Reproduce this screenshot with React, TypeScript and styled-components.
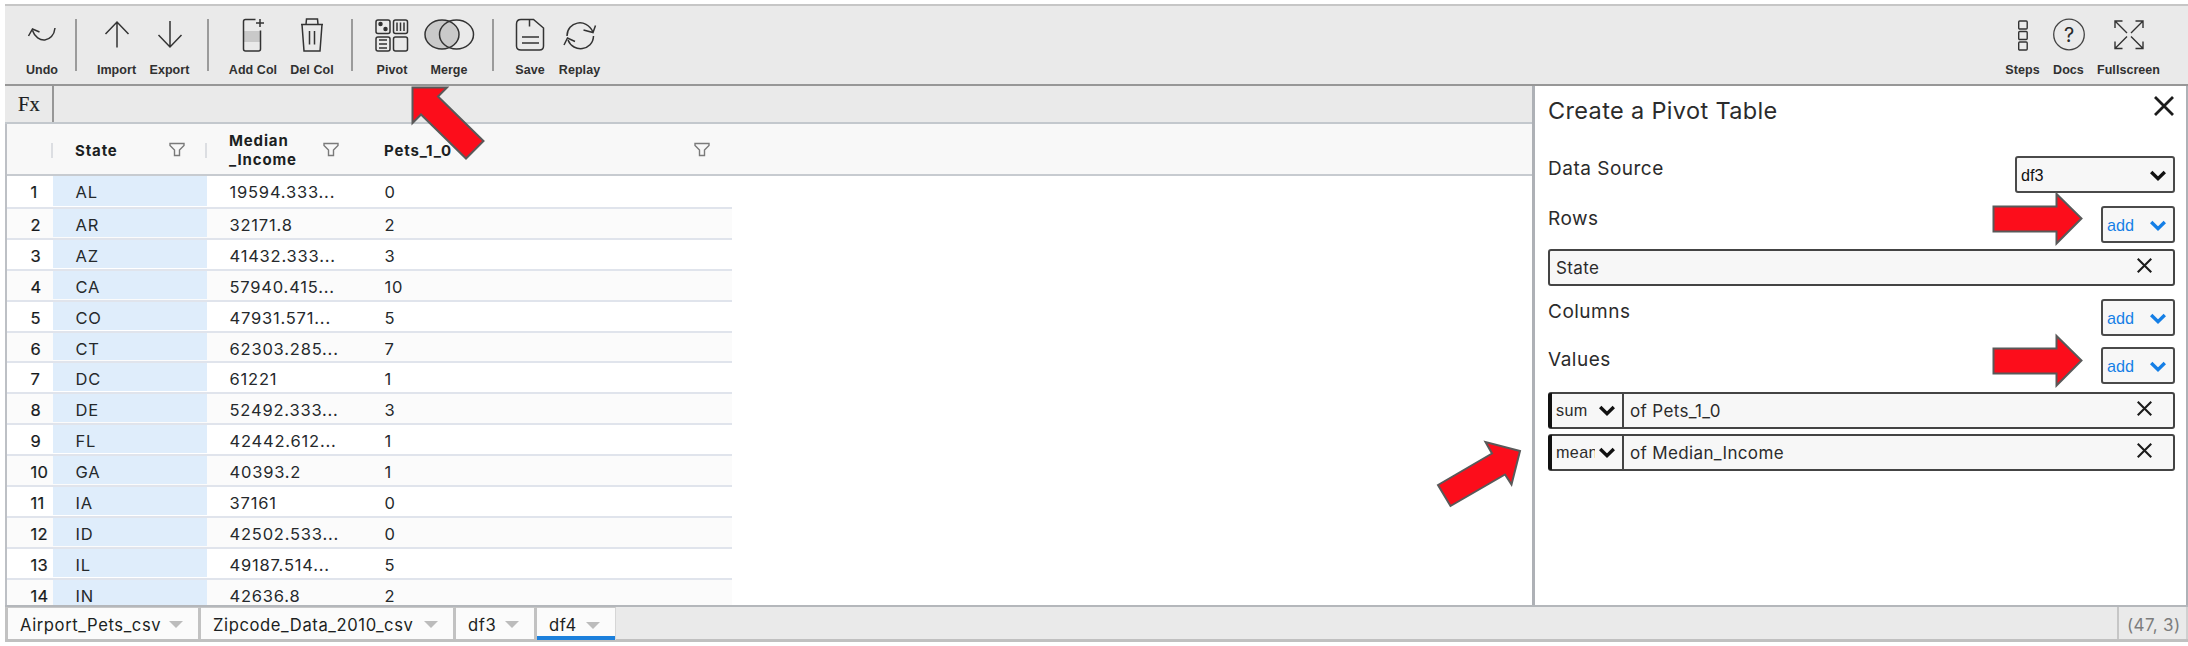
import React from "react";
import styled, { createGlobalStyle } from "styled-components";

const GlobalStyle = createGlobalStyle`
  * { box-sizing: border-box; }
  body { margin: 0; background: #fff; overflow: hidden; }
`;

const Page = styled.div`
  position: relative;
  width: 2188px;
  height: 646px;
  padding: 4px 0 4px 5px;
  font-family: Inter, "Liberation Sans", sans-serif;
  color: #1c1f22;
  background: #fff;
`;

const Shell = styled.div`
  display: flex;
  flex-direction: column;
  height: 638px;
  border-left: 2px solid #bdc0c5;
`;

const Toolbar = styled.header`
  display: flex;
  justify-content: space-between;
  height: 82px;
  flex: none;
  margin-left: -2px;
  padding: 0 23px 0 8px;
  background: #eaeaea;
  border-top: 2px solid #c6c6c6;
  border-bottom: 2px solid #979797;
`;

const Group = styled.div`
  display: flex;
`;

const Tool = styled.button<{ $w: number }>`
  display: flex;
  flex-direction: column;
  align-items: center;
  width: ${(p) => p.$w}px;
  padding: 8px 0 0;
  border: 0;
  background: none;
  color: #303030;
  svg { display: block; height: 42px; flex: none; overflow: visible; }
`;

const ToolLabel = styled.span`
  margin-top: 7px;
  font: bold 12.5px/14px "Liberation Sans", Arial, sans-serif;
  letter-spacing: 0.05px;
  white-space: nowrap;
`;

const Divider = styled.div<{ $l: number; $r: number }>`
  width: 2px;
  height: 52px;
  margin: 13px ${(p) => p.$r}px 0 ${(p) => p.$l}px;
  background: #9b9b9b;
`;

const Body = styled.div`
  display: flex;
  flex: 1;
  min-height: 0;
`;

const Sheet = styled.section`
  display: flex;
  flex-direction: column;
  flex: 1;
  min-width: 0;
`;

const FormulaBar = styled.div`
  display: flex;
  height: 38px;
  flex: none;
  margin-left: -2px;
  background: #eaeaea;
  border-bottom: 2px solid #c3c8cd;
`;

const FxLabel = styled.div`
  width: 49px;
  padding: 7px 0 0 13px;
  border-right: 2px solid #979797;
  font: 20.5px/23px "Liberation Serif", serif;
  letter-spacing: 0.1px;
  -webkit-text-stroke: 0.2px;
`;

const HeaderRow = styled.div`
  display: flex;
  align-items: center;
  height: 52px;
  flex: none;
  background: #f8f8f8;
  border-bottom: 2px solid #c7cbd0;
  font-size: 15px;
  font-weight: 700;
  line-height: 19px;
  letter-spacing: 0.85px;
`;

const HeaderCell = styled.div<{ $w: number; $pr: number; $bar?: boolean }>`
  position: relative;
  display: flex;
  align-items: center;
  justify-content: space-between;
  width: ${(p) => p.$w}px;
  padding: 2px ${(p) => p.$pr}px 0 22px;
  white-space: pre-line;
  svg { margin-top: -2px; }
  &::before {
    content: "";
    position: absolute;
    left: -2px;
    width: 2px;
    height: 15px;
    background: ${(p) => (p.$bar ? "#dcdee2" : "transparent")};
  }
`;

const Rows = styled.div`
  flex: 1;
  overflow: hidden;
`;

const Row = styled.div<{ $h: number; $odd: boolean }>`
  display: flex;
  width: 725px;
  height: ${(p) => p.$h}px;
  background: ${(p) => (p.$odd ? "#fbfbfb" : "#fff")};
  border-bottom: 2px solid #e0e4ec;
  font-size: 16.5px;
  line-height: 32px;
`;

const Cell = styled.div<{ $w: number; $selected?: boolean; $index?: boolean }>`
  width: ${(p) => p.$w}px;
  height: calc(100% - 1px);
  padding-left: ${(p) => (p.$index ? 23.5 : 22.5)}px;
  background: ${(p) => (p.$selected ? "#dfedfb" : "transparent")};
  color: ${(p) => (p.$index ? "#16191c" : "#25292c")};
  -webkit-text-stroke: ${(p) => (p.$index ? "0.2px" : "0")};
  letter-spacing: ${(p) => (p.$index ? "0.2px" : "0.8px")};
`;

const Panel = styled.aside`
  display: flex;
  flex-direction: column;
  width: 656px;
  padding: 0 11px 0 13px;
  border-left: 3px solid #aeb1b6;
  border-right: 2px solid #aeb1b6;
  background: #fff;
  color: #2b2b2b;
`;

const TitleRow = styled.div`
  display: flex;
  justify-content: space-between;
  height: 70px;
  padding: 10px 1px 0 0;
`;

const Title = styled.h2`
  margin: -1px 0 0;
  font-size: 23.5px;
  line-height: 31px;
  font-weight: 400;
  letter-spacing: 0.35px;
`;

const CloseMark = styled.svg<{ $s: number }>`
  width: ${(p) => p.$s}px;
  height: ${(p) => p.$s}px;
  fill: none;
  stroke: #1c1c1c;
  stroke-width: 2.8;
  overflow: visible;
`;

const Field = styled.div<{ $h: number }>`
  display: flex;
  justify-content: space-between;
  height: ${(p) => p.$h}px;
  font-size: 19px;
  line-height: 25px;
  letter-spacing: 0.5px;
`;

const Select = styled.button<{ $w: number; $accent?: boolean }>`
  display: flex;
  align-items: center;
  justify-content: space-between;
  width: ${(p) => p.$w}px;
  height: 37px;
  padding: 1px 7px 0 4px;
  border: 2px solid #4a4a4a;
  border-radius: 3px;
  background: #f7f7f7;
  color: ${(p) => (p.$accent ? "#157fe6" : "#111")};
  font: 16.2px "Liberation Sans", Arial, sans-serif;
`;

const Chip = styled.div<{ $gap: number }>`
  display: flex;
  align-items: center;
  height: 37px;
  flex: none;
  margin-bottom: ${(p) => p.$gap}px;
  padding-right: 21px;
  border: 2px solid #444;
  border-radius: 3px;
  background: #f7f7f7;
  font-size: 17px;
  letter-spacing: 0.35px;
  > svg { margin-bottom: 4px; }
`;

const ChipText = styled.span`
  flex: 1;
  padding-left: 6px;
`;

const Aggregate = styled.div`
  display: flex;
  align-items: center;
  justify-content: space-between;
  width: 76px;
  height: 35px;
  margin: -1px 0 -1px -2px;
  padding: 0 7px 0 4px;
  border-left: 4px solid #111;
  border-right: 2px solid #444;
  border-radius: 3px 0 0 3px;
  font: 16.2px "Liberation Sans", Arial, sans-serif;
`;

const AggregateName = styled.span`
  width: 39px;
  overflow: hidden;
  white-space: nowrap;
`;

const Footer = styled.footer`
  display: flex;
  height: 37px;
  flex: none;
  margin-left: -2px;
  background: #eaeaea;
  border-top: 2px solid #b4b7bb;
  border-bottom: 3px solid #c0c0c0;
`;

const Tab = styled.div<{ $w: number; $active?: boolean }>`
  display: flex;
  align-items: center;
  justify-content: space-between;
  width: ${(p) => p.$w}px;
  height: ${(p) => (p.$active ? 33 : 32)}px;
  padding: 2px 15px 0 12px;
  background: #fbfbfb;
  border-right: ${(p) => (p.$active ? "1px solid #d6d6d6" : "3px solid #c2c2c2")};
  border-top: 1px solid #c8c8c8;
  box-shadow: ${(p) => (p.$active ? "inset 0 -4px #1c80dc" : "none")};
  font-size: 16.6px;
  letter-spacing: 0.6px;
  white-space: nowrap;
  &:first-child { width: ${(p) => p.$w + 3}px; border-left: 3px solid #c2c2c2; }
`;

const Caret = styled.i`
  border: 7px solid transparent;
  border-top-color: #bcbcbc;
  border-bottom: 0;
`;

const Shape = styled.div`
  width: 71px;
  margin-left: auto;
  padding: 6px 0 0 8px;
  border-left: 2px solid #c6c6c6;
  border-right: 2px solid #d0d0d0;
  color: #7d7d7d;
  font-size: 17px;
  line-height: 24px;
  letter-spacing: 0.35px;
  white-space: nowrap;
`;

const Annotations = styled.svg`
  position: absolute;
  left: 0;
  top: 0;
  fill: #fc0d1b;
  stroke: #595959;
  stroke-width: 2;
`;

const line = { fill: "none", stroke: "#333", strokeWidth: 1.5 };

const icons: Record<string, React.ReactNode> = {
  Undo: (
    <svg width="28" height="42" {...line}>
      <path d="M27 14C25.500 29 9 30 4.500 16.500M0.500 22l4-7 7 3" />
    </svg>
  ),
  Import: (
    <svg width="24" height="42" {...line}><path d="M12 33.500V8M0.500 20L12 8l11.500 12" /></svg>
  ),
  Export: (
    <svg width="24" height="42" {...line}><path d="M12 7v26M0.500 21L12 33l11.500-12" /></svg>
  ),
  "Add Col": (
    <svg width="22" height="42" {...line}>
      <rect x="2" y="17" width="17" height="11" fill="#c9c9c9" stroke="none" />
      <path d="M13.500 5.500H3.500q-2 0-2 2v27.500q0 2 2 2h13q2 0 2-2V16.500M18 5v8M14 9h8" />
    </svg>
  ),
  "Del Col": (
    <svg width="22" height="42" {...line}>
      <path d="M0 10.500h22M5 10.500l0.500-5.500h11l0.500 5.500M1 10.500L3 37h16l2-26.500M8.500 17v13.500M13.500 17v13.500" />
    </svg>
  ),
  Pivot: (
    <svg width="34" height="42" {...line}>
      <rect x="1" y="6" width="14" height="13.500" rx="2" />
      <rect x="18.500" y="6" width="14" height="13.500" rx="2" />
      <rect x="1" y="23" width="14" height="14" rx="2" />
      <rect x="18.500" y="23" width="14" height="14" rx="2" />
      <circle cx="5.500" cy="10" r="1.500" fill="#2a2a2a" />
      <circle cx="10.500" cy="15" r="1.500" fill="#2a2a2a" />
      <path d="M22 8.500v8.500M25.500 8.500v8.500M29 8.500v8.500M4 26h8M4 30h8M4 34h8" />
    </svg>
  ),
  Merge: (
    <svg width="50" height="42" {...line}>
      <ellipse cx="18" cy="20.500" rx="17" ry="14.500" fill="#c9c9c9" />
      <ellipse cx="32.500" cy="20.500" rx="17" ry="14.500" />
    </svg>
  ),
  Save: (
    <svg width="30" height="42" {...line}>
      <path d="M6 5.500h12.500l10 8.500v18q0 4-4 4H6q-4.500 0-4.500-4V10q0-4.500 4.500-4.500zM14.500 5.500v7M7 23h17M7 29h17" />
    </svg>
  ),
  Replay: (
    <svg width="34" height="42" {...line}>
      <path d="M4 22C4 8 23 3 30 18M20.500 16l9.500 2.500 2.500-7M30.500 22C30 37 10 39 5 26M1 31l3.500-7 7.500 3.500" />
    </svg>
  ),
  Steps: (
    <svg width="10" height="42" {...line} strokeWidth={1.4}>
      <rect x="0.700" y="7" width="8.500" height="8" rx="1" />
      <rect x="0.700" y="17.500" width="8.500" height="8" rx="1" />
      <rect x="0.700" y="28" width="8.500" height="8" rx="1" />
    </svg>
  ),
  Docs: (
    <svg width="32" height="42">
      <circle cx="16" cy="20.500" r="15.300" fill="none" stroke="#444" strokeWidth="1.300" />
      <text x="16" y="27.500" textAnchor="middle" fontFamily="Inter, sans-serif" fontSize="20" fill="#2a2a2a">?</text>
    </svg>
  ),
  Fullscreen: (
    <svg width="30" height="42" {...line} strokeWidth={1.4}>
      <path d="M13 19L1 7M1 14V7h7.500M17 19L29 7M21.500 7H29v7M13 22.500L1 34.500M1 27.500v7h7.500M17 22.500l12 12M29 27.500v7h-7.500" />
    </svg>
  ),
};

const ToolButton = ({ name, w }: { name: string; w: number }) => (
  <Tool $w={w}>
    {icons[name]}
    <ToolLabel>{name}</ToolLabel>
  </Tool>
);

const Funnel = () => (
  <svg width="16" height="15" viewBox="0 0 16 15" fill="none" stroke="#7a7a7a" strokeWidth="1.4">
    <path d="M1 1.500h14v2L10.500 8v5.500h-5V8L1 3.500z" />
  </svg>
);

const Chevron = ({ color = "#111" }: { color?: string }) => (
  <svg width="16" height="11" viewBox="0 0 16 11" fill="none" stroke={color} strokeWidth="3.400">
    <path d="M1.200 2L8 8.600 14.800 2" />
  </svg>
);

const Close = ({ size }: { size: number }) => (
  <CloseMark $s={size} viewBox="0 0 20 20"><path d="M1 1l18 18M19 1L1 19" /></CloseMark>
);

const AddSelect = () => (
  <Select $w={74} $accent>
    add
    <Chevron color="#157fe6" />
  </Select>
);

const data = [
  ["AL", "19594.333...", "0"],
  ["AR", "32171.8", "2"],
  ["AZ", "41432.333...", "3"],
  ["CA", "57940.415...", "10"],
  ["CO", "47931.571...", "5"],
  ["CT", "62303.285...", "7"],
  ["DC", "61221", "1"],
  ["DE", "52492.333...", "3"],
  ["FL", "42442.612...", "1"],
  ["GA", "40393.2", "1"],
  ["IA", "37161", "0"],
  ["ID", "42502.533...", "0"],
  ["IL", "49187.514...", "5"],
  ["IN", "42636.8", "2"],
];

const values = [
  { fn: "sum", of: "Pets_1_0", gap: 5 },
  { fn: "mean", of: "Median_Income", gap: 0 },
];

export default function App() {
  return (
    <Page>
      <GlobalStyle />
      <Shell>
        <Toolbar>
          <Group>
            <ToolButton name="Undo" w={58} />
            <Divider $l={4} $r={13} />
            <ToolButton name="Import" w={53} />
            <ToolButton name="Export" w={53} />
            <Divider $l={11} $r={14} />
            <ToolButton name="Add Col" w={60} />
            <ToolButton name="Del Col" w={58} />
            <Divider $l={10} $r={14} />
            <ToolButton name="Pivot" w={50} />
            <ToolButton name="Merge" w={64} />
            <Divider $l={11} $r={11} />
            <ToolButton name="Save" w={50} />
            <ToolButton name="Replay" w={49} />
          </Group>
          <Group>
            <ToolButton name="Steps" w={45} />
            <ToolButton name="Docs" w={47} />
            <ToolButton name="Fullscreen" w={73} />
          </Group>
        </Toolbar>
        <Body>
          <Sheet>
            <FormulaBar><FxLabel>Fx</FxLabel></FormulaBar>
            <HeaderRow>
              <HeaderCell $w={46} $pr={0} />
              <HeaderCell $w={154} $pr={22} $bar>State<Funnel /></HeaderCell>
              <HeaderCell $w={155} $pr={23} $bar>{"Median\n_Income"}<Funnel /></HeaderCell>
              <HeaderCell $w={371} $pr={23}>Pets_1_0<Funnel /></HeaderCell>
            </HeaderRow>
            <Rows>
              {data.map(([state, income, pets], i) => (
                <Row key={state} $h={i === 0 ? 33 : 30.9} $odd={i % 2 === 1}>
                  <Cell $w={46} $index>{i + 1}</Cell>
                  <Cell $w={154} $selected>{state}</Cell>
                  <Cell $w={155}>{income}</Cell>
                  <Cell $w={370}>{pets}</Cell>
                </Row>
              ))}
            </Rows>
          </Sheet>
          <Panel>
            <TitleRow>
              <Title>Create a Pivot Table</Title>
              <Close size={20} />
            </TitleRow>
            <Field $h={50}>Data Source<Select $w={160}>df3<Chevron /></Select></Field>
            <Field $h={43}>Rows<AddSelect /></Field>
            <Chip $gap={13}><ChipText>State</ChipText><Close size={15} /></Chip>
            <Field $h={48}>Columns<AddSelect /></Field>
            <Field $h={45}>Values<AddSelect /></Field>
            {values.map((v) => (
              <Chip key={v.of} $gap={v.gap}>
                <Aggregate><AggregateName>{v.fn}</AggregateName><Chevron /></Aggregate>
                <ChipText>of {v.of}</ChipText>
                <Close size={15} />
              </Chip>
            ))}
          </Panel>
        </Body>
        <Footer>
          <Tab $w={193}>Airport_Pets_csv<Caret /></Tab>
          <Tab $w={255}>Zipcode_Data_2010_csv<Caret /></Tab>
          <Tab $w={81}>df3<Caret /></Tab>
          <Tab $w={79} $active>df4<Caret /></Tab>
          <Shape>(47, 3)</Shape>
        </Footer>
      </Shell>
      <Annotations width="2188" height="646">
        <path d="M412.500 87.500H447l-9 9 45.500 44.500-17.500 17.500-45-44-8.500 8.500z" />
        <path d="M1993.500 206.500h63V194l25 24.500-25 25V231.500h-63z" />
        <path d="M1993.500 348.500h63V336l25 24.500-25 25V373.500h-63z" />
        <path d="M1520 451l-34.500-9 6.500 11.500-54 31.500 12.500 21 54.500-31.500 6.500 10z" />
      </Annotations>
    </Page>
  );
}
